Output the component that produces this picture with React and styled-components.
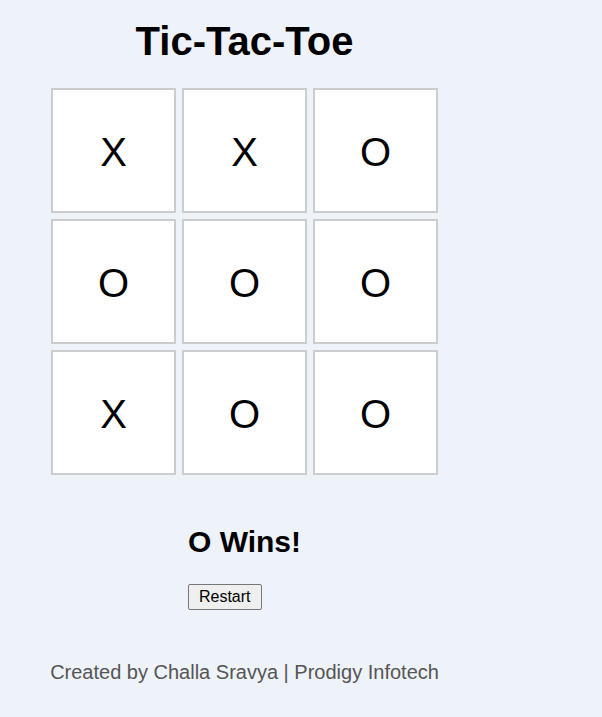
import styled, { createGlobalStyle } from 'styled-components';

const GlobalStyle = createGlobalStyle`
  body {
    margin: 0;
    background: #eef2f9;
    font-family: "Liberation Sans", Arial, sans-serif;
  }
`;

const Page = styled.div`
  padding: 18px 0 0 51px;
`;

const Column = styled.div`
  width: 387px;
  display: flex;
  flex-direction: column;
  align-items: center;
`;

const Title = styled.h1`
  margin: 0;
  font-size: 40px;
  line-height: 46px;
  font-weight: bold;
  color: #000;
`;

const Board = styled.div`
  margin-top: 24px;
  display: grid;
  grid-template-columns: repeat(3, 125px);
  grid-auto-rows: 125px;
  gap: 6px;
`;

const Cell = styled.div`
  box-sizing: border-box;
  background: #fff;
  border: 2px solid #cccccc;
  padding-top: 3px;
  display: flex;
  align-items: center;
  justify-content: center;
  font-size: 40px;
  color: #000;
  cursor: pointer;
`;

const StatusBox = styled.div`
  margin-top: 50px;
  display: flex;
  flex-direction: column;
  align-items: flex-start;
`;

const Status = styled.h2`
  margin: 0;
  font-size: 30px;
  line-height: 34px;
  font-weight: bold;
  color: #000;
`;

const RestartButton = styled.button`
  margin-top: 25px;
  font-family: "Liberation Sans", Arial, sans-serif;
  font-size: 16px;
  line-height: 18px;
  padding: 3px 10px;
  background: #efefef;
  color: #000;
  border: 1px solid #767676;
  border-radius: 2px;
  cursor: pointer;
`;

const Footer = styled.p`
  margin: 51px 0 0;
  font-size: 20px;
  line-height: 23px;
  color: #555555;
  white-space: nowrap;
`;

const board = ['X', 'X', 'O', 'O', 'O', 'O', 'X', 'O', 'O'];

const App = () => {
  return (
    <Page>
      <GlobalStyle />
      <Column>
        <Title>Tic-Tac-Toe</Title>
        <Board>
          {board.map((v, i) => (
            <Cell key={i}>{v}</Cell>
          ))}
        </Board>
        <StatusBox>
          <Status>O Wins!</Status>
          <RestartButton>Restart</RestartButton>
        </StatusBox>
        <Footer>Created by Challa Sravya | Prodigy Infotech</Footer>
      </Column>
    </Page>
  );
};

export default App;
